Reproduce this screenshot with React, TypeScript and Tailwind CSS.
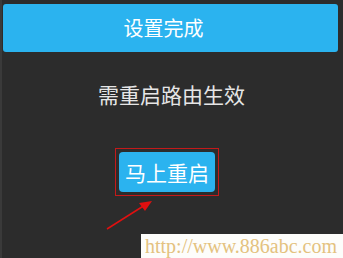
import React from "react";

const cjk = { fontFamily: '"Noto Sans CJK SC", "Noto Sans", sans-serif' };

export default function App() {
  return (
    <div
      className="relative w-[343px] h-[258px] overflow-hidden bg-[#2c2c2c] border-l-2 border-[#3a3a3a]"
      style={cjk}
    >
      <div className="mt-[4px] ml-[1px] mr-[5px] h-[48px] rounded-[3px] bg-[#2bb3ef] flex items-center justify-center">
        <span className="text-[20px] leading-none text-white pr-[14px]">设置完成</span>
      </div>

      <div className="mt-[28px] flex justify-center">
        <span className="text-[21px] leading-[28px] text-[#e6e6e6] pr-[2px]">需重启路由生效</span>
      </div>

      <div className="mt-[40px] flex justify-center">
        <div className="mr-[11px] border border-[#c41a1a] p-[3px]">
          <button className="w-[96px] h-[40px] rounded-[4px] bg-[#2bb3ef] text-white text-[21px] leading-none">
            马上重启
          </button>
        </div>
      </div>

      <svg
        className="absolute left-0 top-0"
        width="343"
        height="258"
        viewBox="0 0 343 258"
      >
        <line x1="105" y1="229" x2="143" y2="205" stroke="#e01010" strokeWidth="1.5" />
        <polygon points="150,201 137,203 143,211" fill="#e01010" />
      </svg>

      <div className="absolute right-0 bottom-0 w-[202px] h-[24px] bg-[#fdfdfb] flex items-center pl-[4px]">
        <span
          className="text-[20px] leading-none text-[#e4c27f] whitespace-nowrap"
          style={{ fontFamily: '"Liberation Serif", serif' }}
        >
          http://www.886abc.com
        </span>
      </div>
    </div>
  );
}
